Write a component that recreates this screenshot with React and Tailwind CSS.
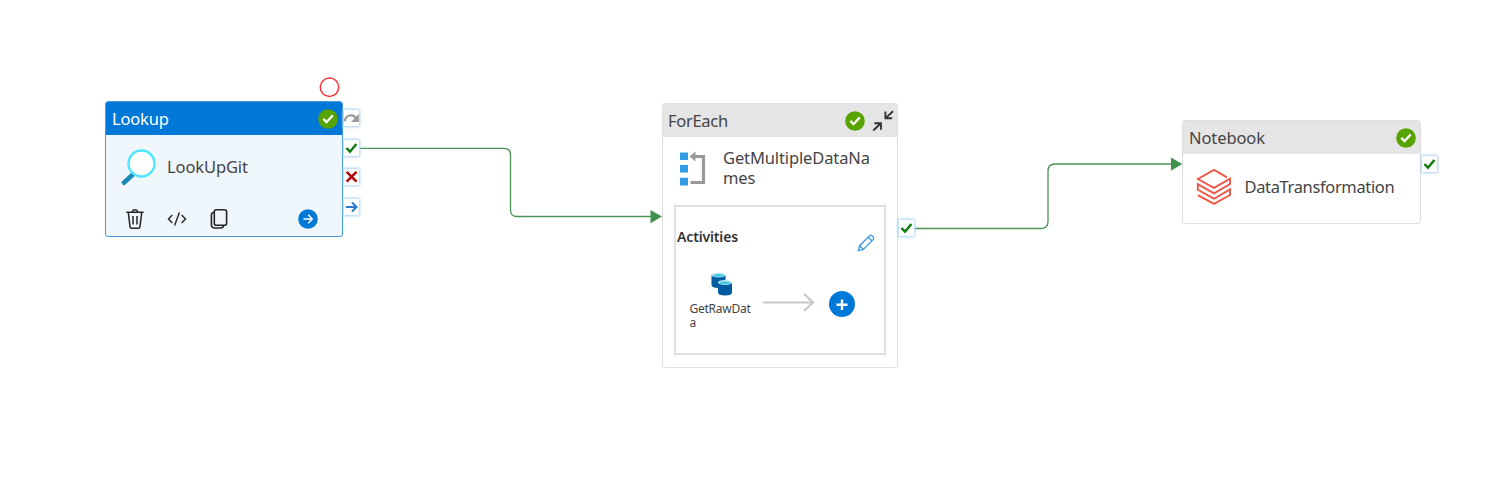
import React from 'react';

function StatusDot({ className = '' }) {
  return (
    <svg viewBox="0 0 20 20" className={`size-5 shrink-0 ${className}`}>
      <circle cx="10" cy="10" r="9.8" fill="#57a300" />
      <path d="M5.3 9.9 8.5 13.2 14.8 6.4" fill="none" stroke="#fff" strokeWidth="2.3" />
    </svg>
  );
}

const glyphs = {
  skip: (
    <g>
      <path d="M1 11.3C1.2 4.7 9.8 3.2 12.2 9" fill="none" stroke="#999" strokeWidth="2.2" />
      <path d="M14.8 4V12H7Z" fill="#999" />
    </g>
  ),
  success: <path d="M2.4 8 6 11.7 12.4 4" fill="none" stroke="#107c10" strokeWidth="2.5" />,
  fail: <path d="M2.7 2.9 12.5 12.7M12.5 2.9 2.7 12.7" fill="none" stroke="#b00b0b" strokeWidth="2.6" />,
  done: <path d="M2 8H12.5M8 3.5 12.6 8 8 12.5" fill="none" stroke="#2b7cd0" strokeWidth="2" />,
};

function Port({ kind }) {
  return (
    <span className="block h-4 w-[15px] shrink-0 rounded-[1px] bg-white shadow-[0_0_3px_1px_#a5cff3]">
      <svg viewBox="0 0 15 16" className="h-4 w-[15px]">{glyphs[kind]}</svg>
    </span>
  );
}

function LookupNode() {
  return (
    <section className="absolute left-[104.5px] top-[100.5px] flex h-[136px] w-[238.5px] flex-col overflow-hidden rounded-[3px] border border-[#459be1] bg-[#eff6fc]">
      <header className="flex h-[33.5px] shrink-0 items-center justify-between bg-[#0078d7] pl-[6.5px] pr-[4px] pt-[1.5px]">
        <span className="text-[16.5px] leading-5 tracking-[-0.18px] text-white">Lookup</span>
        <StatusDot />
      </header>
      <div className="flex h-[64px] items-center pl-[15.5px]">
        <svg viewBox="0 0 35 37" className="h-[37px] w-[35px]">
          <path d="M1.5 35 13 24.5" stroke="#198ab3" strokeWidth="4.5" />
          <circle cx="20.5" cy="14.5" r="13" fill="#fff" stroke="#50e6ff" strokeWidth="2.5" />
        </svg>
        <span className="ml-[11px] text-[16.5px] leading-5 tracking-[-0.12px]">LookUpGit</span>
      </div>
      <footer className="mt-[9px] flex items-center pl-[19.5px] pr-[24.5px] text-[#252525]">
        <svg viewBox="0 0 20 22" className="h-[22px] w-5" fill="none" stroke="currentColor" strokeWidth="1.5">
          <path d="M1.3 4.3H18.7M3.3 4.3 5 18.7Q5.2 20.3 6.8 20.3H13.2Q14.8 20.3 15 18.7L16.7 4.3M7.6 4V3Q7.8 1.7 10 1.7T12.4 3V4M8 8V16.5M12 8V16.5" />
        </svg>
        <svg viewBox="0 0 20 16" className="ml-[21.5px] h-4 w-5" fill="none" stroke="currentColor" strokeWidth="1.4">
          <path d="M5.3 4 1.5 8 5.3 12M14.7 4 18.5 8 14.7 12M12.4 1.5 7.6 14.5" />
        </svg>
        <svg viewBox="0 0 18 22" className="ml-[23px] h-[22px] w-[18px]" fill="none" stroke="currentColor" strokeWidth="1.6">
          <rect x="4.3" y="1.8" width="12.3" height="15.4" rx="2" />
          <path d="M4 4.2Q1.4 4.7 1.4 7V16.5Q1.4 20 5 20H10.5Q13 20 13.7 18" />
        </svg>
        <svg viewBox="0 0 20 20" className="ml-auto size-5">
          <circle cx="10" cy="10" r="9.8" fill="#0078d7" />
          <path d="M5.5 10H14.2M10.2 5.8 14.3 10 10.2 14.2" fill="none" stroke="#fff" strokeWidth="1.4" />
        </svg>
      </footer>
    </section>
  );
}

function Database({ x, y }) {
  return (
    <g transform={`translate(${x} ${y})`}>
      <path d="M0 2.5V12.5Q0 15.5 7 15.5T14 12.5V2.5Z" fill="#005ba1" />
      <ellipse cx="7" cy="2.6" rx="7" ry="2.5" fill="#c9edf5" />
      <ellipse cx="7" cy="2.9" rx="5.6" ry="1.7" fill="#45cbe9" />
    </g>
  );
}

function ForEachNode() {
  return (
    <section className="absolute left-[661.5px] top-[103px] flex h-[265px] w-[236.5px] flex-col overflow-hidden rounded-[3px] border border-[#dedede] bg-white">
      <header className="flex h-[33px] shrink-0 items-center bg-[#e5e5e5] pl-[5.5px] pr-[3px]">
        <span className="text-[16.5px] leading-5 tracking-[-0.3px]">ForEach</span>
        <StatusDot className="ml-auto" />
        <svg viewBox="0 0 22 22" className="ml-[7px] size-[22px]" fill="none" stroke="#333" strokeWidth="1.9">
          <path d="M21 1.2 14.2 7.6M13.4 1.6V8.3H20.2M1.3 20.5 8 14M2.3 13.3H9V19.8" />
        </svg>
      </header>
      <div className="flex h-[68px] shrink-0 items-start pl-[17px] pt-[10.5px]">
        <svg viewBox="0 0 26 36" className="mt-[3.5px] h-9 w-[26px]">
          <path d="M0 1.5H8V9H0ZM0 14H8V21.5H0ZM0 26.8H8V34.4H0Z" fill="#329be6" />
          <path d="M13 5.5H23.5V31.5H10.5" fill="none" stroke="#999" strokeWidth="3.2" />
          <path d="M9.5 5.5 15.5 .5V10.5Z" fill="#999" />
        </svg>
        <span className="ml-[17.5px] block w-[152px] break-all text-[16.5px] leading-5 tracking-[-0.12px]">GetMultipleDataNames</span>
      </div>
      <div className="ml-[11px] flex h-[149.5px] w-[212.5px] flex-col border-2 border-[#e1e1e1]">
        <div className="flex h-[60px] items-center justify-between pl-[1.5px] pr-[9px]">
          <span className="text-[14px] font-semibold leading-5 tracking-[-0.15px] text-[#333]">Activities</span>
          <svg viewBox="0 0 18 18" className="mt-[12px] size-[18px]" fill="none" stroke="#3b96e2" strokeWidth="1.3">
            <path d="M1.3 16.7 2.6 11.7 12.4 1.9Q13.5.8 14.8 1.6L16.3 3.1Q17.1 4.4 16.1 5.6L6.3 15.4ZM11.2 3.2 14.8 6.8M2.6 11.7 6.3 15.4" />
          </svg>
        </div>
        <div className="flex items-start pl-[14px] pt-[1.5px]">
          <div className="flex w-[65.5px] flex-col pt-[3px]">
            <svg viewBox="0 0 22 24" className="ml-[21px] h-6 w-[22px]">
              <Database x={0.5} y={0.5} />
              <Database x={7} y={8} />
            </svg>
            <span className="mt-[6px] w-[62px] break-all text-[12px] leading-[14px] tracking-[-0.25px]">GetRawData</span>
          </div>
          <svg viewBox="0 0 54 20" className="ml-[6.5px] mt-[23.5px] h-5 w-[54px]" fill="none" stroke="#c8c8c8" strokeWidth="2.2">
            <path d="M1 10.5H51M42 1.8 51 10.5 42 19" />
          </svg>
          <svg viewBox="0 0 26 26" className="ml-[13.5px] mt-[22px] size-[26px]">
            <circle cx="13" cy="13" r="13" fill="#0078d7" />
            <path d="M13 8.5V19M7.5 13.7H18.5" stroke="#fff" strokeWidth="2.4" />
          </svg>
        </div>
      </div>
    </section>
  );
}

function NotebookNode() {
  return (
    <section className="absolute left-[1182px] top-[120px] flex h-[103.5px] w-[239px] flex-col overflow-hidden rounded-[3px] border border-[#dedede] bg-white">
      <header className="flex h-[33px] shrink-0 items-center justify-between bg-[#e5e5e5] pl-[6px] pr-[4px]">
        <span className="text-[16.5px] leading-5 tracking-[-0.1px]">Notebook</span>
        <StatusDot />
      </header>
      <div className="flex h-[64px] items-center pl-[13px]">
        <svg viewBox="0 0 36 38" className="h-[38px] w-9" fill="none" stroke="#f05545" strokeWidth="1.9">
          <path d="M31 10.3 18 2.9 1.8 12 18 20.8 34 11.6V17L18 26.4 1.8 17.2V22.8L18 31.7 34 22.4V28L18 36.9 1.8 28.2" />
        </svg>
        <span className="ml-[12.5px] mt-px text-[16.5px] leading-5 tracking-[-0.36px]">DataTransformation</span>
      </div>
    </section>
  );
}

export default function App() {
  return (
    <main className="relative h-[478px] w-[1490px] overflow-hidden bg-white font-['Noto_Sans','Open_Sans',sans-serif] text-[#444]">
      <svg viewBox="0 0 1490 478" className="absolute inset-0 size-full" fill="none">
        <path d="M360 148.3H504Q510.5 148.3 510.5 155V210Q510.5 216.5 517 216.5H652M915 228.5H1041Q1048 228.5 1048 221.5V171Q1048 164 1055 164H1172" stroke="#4b9455" strokeWidth="1.3" />
        <path d="M650.5 210 662 216.6 650.5 223.2ZM1171 157.5 1182.3 164 1171 170.7Z" fill="#43914e" />
        <circle cx="329.5" cy="87.3" r="9.2" stroke="#f3373b" strokeWidth="1.5" />
      </svg>
      <LookupNode />
      <div className="absolute left-[344px] top-[110px] flex flex-col gap-[13.7px]">
        <Port kind="skip" />
        <Port kind="success" />
        <Port kind="fail" />
        <Port kind="done" />
      </div>
      <ForEachNode />
      <div className="absolute left-[899px] top-[220.4px]"><Port kind="success" /></div>
      <NotebookNode />
      <div className="absolute left-[1421.5px] top-[156.4px]"><Port kind="success" /></div>
    </main>
  );
}
